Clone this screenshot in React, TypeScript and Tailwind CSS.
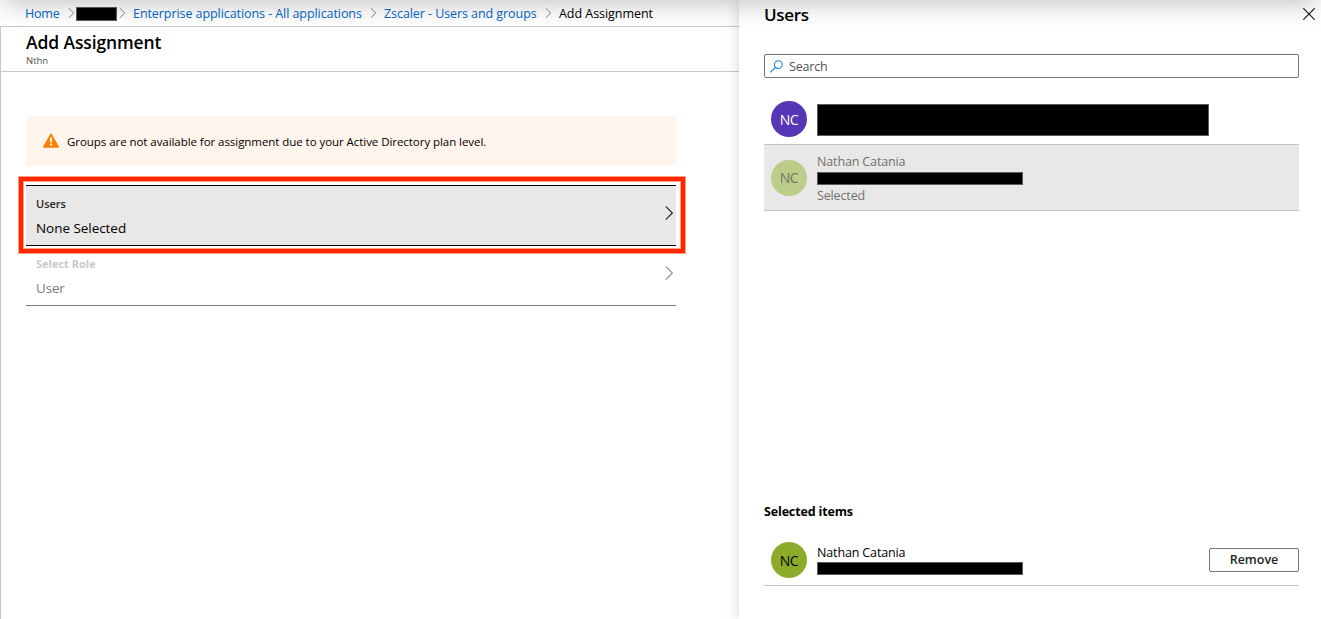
import React from "react";

type ChevronProps = { className: string; big?: boolean };

function Chevron({ className, big }: ChevronProps) {
  return big ? (
    <svg className={className} width="9" height="16" viewBox="0 0 9 16" fill="none" stroke="currentColor" strokeWidth="1.1">
      <path d="M0.7 1.3 7.4 8 0.7 14.7" />
    </svg>
  ) : (
    <svg className={className} width="7" height="12" viewBox="0 0 7 12" fill="none" stroke="currentColor">
      <path d="M0.8 1.2 5.8 6 0.8 10.8" />
    </svg>
  );
}

function Redacted({ className }: { className: string }) {
  return <div className={`shrink-0 border border-[#5c5c5c] bg-black ${className}`} />;
}

function Avatar({ className }: { className: string }) {
  return (
    <div className={`flex h-9 w-9 shrink-0 items-center justify-center rounded-full text-[14px] leading-none tracking-[-0.5px] ${className}`}>
      NC
    </div>
  );
}

function Breadcrumb() {
  return (
    <nav className="flex h-[27px] shrink-0 items-center border-b border-[#c8c8c8] pl-[25px] text-[12.5px] leading-[26px] whitespace-nowrap text-[#0067cc]">
      <a className="w-[43px] pt-[2px] tracking-[-0.2px]">Home</a>
      <Chevron className="text-[#858585]" />
      <Redacted className="mt-[2px] ml-px h-[14px] w-[41px]" />
      <Chevron className="ml-[2px] text-[#858585]" />
      <a className="ml-[7px] w-[237px] pt-[2px] tracking-[-0.07px]">Enterprise applications - All applications</a>
      <Chevron className="text-[#858585]" />
      <a className="ml-[7px] w-[161px] pt-[2px] tracking-[-0.07px]">Zscaler - Users and groups</a>
      <Chevron className="text-[#858585]" />
      <span className="ml-[7px] pt-[2px] tracking-[-0.04px] text-black">Add Assignment</span>
    </nav>
  );
}

function AssignmentBlade() {
  return (
    <main className="flex w-[739px] shrink-0 flex-col">
      <Breadcrumb />
      <div className="flex flex-1 flex-col border-l border-[#c8c8c8]">
        <header className="h-[45px] border-b border-[#c8c8c8] pl-[25px] whitespace-nowrap">
          <h1 className="pt-[4px] text-[17.5px] leading-[22px] font-semibold tracking-[-0.12px] text-black">Add Assignment</h1>
          <p className="pt-px text-[9.5px] leading-[13px] text-[#505050]">Nthn</p>
        </header>
        <div className="ml-[25px] w-[650px] pt-11">
          <div className="flex h-[50px] items-center rounded-[2px] bg-[#fff5ec] pl-[17px]">
            <svg className="mb-[2px]" width="17" height="15" viewBox="0 0 17 15">
              <path d="M7.4 0.7Q8 0 8.6 0.7L16 13.8Q16.3 14.8 15.4 14.8H.7Q-.2 14.8.1 13.8Z" fill="#ff8000" />
              <path d="M7 4.6H9L8.8 9.6H7.2Z" fill="white" />
              <circle cx="8" cy="11.6" r="1.1" fill="white" />
            </svg>
            <span className="ml-[7px] pt-[2px] text-[11.5px] tracking-[-0.055px] whitespace-nowrap text-black">
              Groups are not available for assignment due to your Active Directory plan level.
            </span>
          </div>
          <div className="relative mt-[19px] flex h-[61px] items-center justify-between border-y border-black bg-[#e9e8e6] pr-[2px] pl-[10px]">
            <div>
              <div className="text-[11px] leading-[24px] font-semibold text-[#252525]">Users</div>
              <div className="text-[13.5px] leading-[24px] tracking-[-0.05px] text-black">None Selected</div>
            </div>
            <Chevron big className="mb-[5px] text-[#222]" />
            <div className="absolute -top-[9px] -right-[9px] -bottom-[8px] -left-[7px] border-4 border-[#ff2600] shadow-[0_0_0_1px_#ff9d8b,inset_0_0_0_1px_#ff9d8b]" />
          </div>
          <div className="flex h-[60px] items-center justify-between border-b border-[#7a7a7a] pr-[2px] pl-[10px]">
            <div>
              <div className="text-[11px] leading-[24px] font-bold text-[#c9c9c9]">Select Role</div>
              <div className="text-[13.5px] leading-[24px] tracking-[-0.2px] text-[#7a7a7a]">User</div>
            </div>
            <Chevron big className="mb-[5px] text-[#8a8a8a]" />
          </div>
        </div>
      </div>
    </main>
  );
}

function UsersPanel() {
  return (
    <aside className="flex flex-1 flex-col bg-white pr-[22px] pl-[25px] whitespace-nowrap shadow-[0_0_14px_rgba(0,0,0,0.17)]">
      <div className="-mr-[16px] flex h-[54px] items-start justify-between">
        <h2 className="pt-[4px] text-[17px] leading-[22px] font-semibold tracking-[-0.3px] text-black">Users</h2>
        <svg className="mt-2" width="12" height="12" viewBox="0 0 12 12" stroke="#111" strokeWidth="1.1">
          <path d="M.3.3 11.7 11.7M11.7.3.3 11.7" />
        </svg>
      </div>
      <div className="flex h-6 shrink-0 items-center rounded-[2px] border border-[#757575] pl-[5px] text-[12.5px] text-[#505050]">
        <svg width="13" height="13" viewBox="0 0 13 13" fill="none" stroke="#1b7fd8" strokeWidth="1.1">
          <circle cx="8.3" cy="4.6" r="3.9" />
          <path d="M5.4 7.5.4 12.4" />
        </svg>
        <span className="ml-[6px] pt-[2px] tracking-[-0.2px]">Search</span>
      </div>
      <div className="mt-[16px] flex h-[50px] shrink-0 items-center pl-[7px]">
        <Avatar className="bg-[#5736b5] pt-[2px] text-white" />
        <Redacted className="mt-[2px] ml-[10px] h-[32px] w-[392px]" />
      </div>
      <div className="flex h-[67px] shrink-0 items-center border-y border-[#c4c4c4] bg-[#e9e8e6] pl-[7px] text-[12.5px] text-[#707070]">
        <Avatar className="bg-[#bccc89] text-[#707562]" />
        <div className="mt-[3px] ml-[10px] leading-[18px] tracking-[-0.14px]">
          <div>Nathan Catania</div>
          <Redacted className="mt-[1px] mb-[2px] h-[13px] w-[206px]" />
          <div>Selected</div>
        </div>
      </div>
      <h3 className="mt-[291px] text-[12.5px] leading-[20px] font-bold tracking-[-0.15px] text-black">Selected items</h3>
      <div className="mt-[12px] flex h-[52px] shrink-0 items-center border-b border-[#c4c4c4] pl-[7px]">
        <Avatar className="bg-[#8dab2b] pt-[3px] text-black" />
        <div className="ml-[10px] flex-1 text-[12.5px] leading-[18px] tracking-[-0.14px] text-black">
          <div>Nathan Catania</div>
          <Redacted className="h-[13px] w-[206px]" />
        </div>
        <button className="h-6 w-[90px] rounded-[2px] border border-[#757575] bg-white pt-px text-[12.5px] leading-none font-semibold text-[#252525]">Remove</button>
      </div>
    </aside>
  );
}

export default function App() {
  return (
    <div className="relative flex h-[619px] w-[1321px] overflow-hidden bg-white font-['Open_Sans','Noto_Sans',sans-serif]">
      <AssignmentBlade />
      <UsersPanel />
      <div className="pointer-events-none absolute -top-[50px] right-[4px] left-[4px] h-[50px] shadow-[0_4px_26px_rgba(0,0,0,0.24)]" />
    </div>
  );
}
